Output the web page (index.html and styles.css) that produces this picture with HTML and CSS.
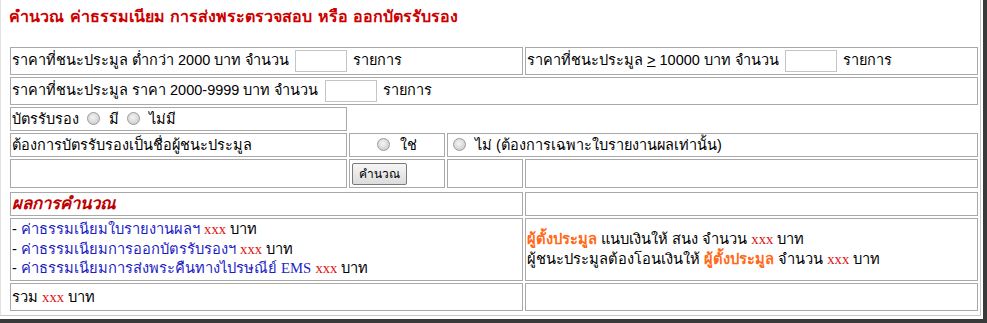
FILE: index.html
```html
<!DOCTYPE html>
<html lang="th">
<head>
  <meta charset="UTF-8">
  <title>คำนวณ ค่าธรรมเนียม</title>
  <link rel="stylesheet" href="styles.css">
</head>
<body>
  <div class="frame">
    <div class="page">
      <h1 class="title">คำนวณ ค่าธรรมเนียม การส่งพระตรวจสอบ หรือ ออกบัตรรับรอง</h1>

      <table class="grid calc-form">
        <colgroup>
          <col style="width:337px">
          <col style="width:96px">
          <col style="width:76px">
          <col style="width:453px">
        </colgroup>
        <tr class="row-input">
          <td colspan="3">ราคาที่ชนะประมูล ต่ำกว่า 2000 บาท จำนวน <input type="text" class="qty"> รายการ</td>
          <td>ราคาที่ชนะประมูล <u>&gt;</u> 10000 บาท จำนวน <input type="text" class="qty"> รายการ</td>
        </tr>
        <tr class="row-input">
          <td colspan="4">ราคาที่ชนะประมูล ราคา 2000-9999 บาท จำนวน <input type="text" class="qty"> รายการ</td>
        </tr>
        <tr class="row-plain">
          <td>บัตรรับรอง <input type="radio" name="card"> มี <input type="radio" name="card"> ไม่มี</td>
          <td class="blank" colspan="3"></td>
        </tr>
        <tr class="row-plain">
          <td>ต้องการบัตรรับรองเป็นชื่อผู้ชนะประมูล</td>
          <td class="center"><input type="radio" name="owner"> ใช่</td>
          <td colspan="2"><input type="radio" name="owner"> ไม่ (ต้องการเฉพาะใบรายงานผลเท่านั้น)</td>
        </tr>
        <tr class="row-button">
          <td></td>
          <td><button type="button" class="btn">คำนวณ</button></td>
          <td></td>
          <td></td>
        </tr>
      </table>

      <table class="grid calc-result">
        <colgroup>
          <col style="width:513px">
          <col style="width:453px">
        </colgroup>
        <tr class="row-head">
          <td><span class="result-head">ผลการคำนวณ</span></td>
          <td></td>
        </tr>
        <tr class="row-lines">
          <td>
            - <span class="fee">ค่าธรรมเนียมใบรายงานผลฯ</span> <span class="num">xxx</span> บาท<br>
            - <span class="fee">ค่าธรรมเนียมการออกบัตรรับรองฯ</span> <span class="num">xxx</span> บาท<br>
            - <span class="fee">ค่าธรรมเนียมการส่งพระคืนทางไปรษณีย์ <span class="latin">EMS</span></span> <span class="num">xxx</span> บาท
          </td>
          <td>
            <span class="party">ผู้ตั้งประมูล</span> แนบเงินให้ สนง จำนวน <span class="num">xxx</span> บาท<br>
            ผู้ชนะประมูลต้องโอนเงินให้ <span class="party">ผู้ตั้งประมูล</span> จำนวน <span class="num">xxx</span> บาท
          </td>
        </tr>
        <tr class="row-total">
          <td>รวม <span class="num">xxx</span> บาท</td>
          <td></td>
        </tr>
      </table>
    </div>
  </div>
</body>
</html>
```

FILE: styles.css
```css
html, body {
  margin: 0;
  padding: 0;
  background-color: #3a3a3a;
}

body {
  font-family: "Liberation Sans", Tahoma, "DejaVu Sans", sans-serif;
  font-size: 14.5px;
  color: #000;
}

.frame {
  width: 983px;
  height: 319px;
  background-color: #fff;
  overflow: hidden;
}

.page {
  width: 972px;
  height: 315px;
  padding-left: 7px;
  border-left: 1px solid #e2e2e2;
  border-right: 1px solid #c8c8c8;
  border-bottom: 1px solid #c8c8c8;
}

.title {
  margin: 0;
  padding: 7px 0 0 1px;
  height: 45px;
  box-sizing: border-box;
  font-family: Tahoma, "DejaVu Sans", sans-serif;
  font-size: 16px;
  line-height: 20px;
  font-weight: bold;
  color: #cc0000;
}

.grid {
  width: 972px;
  table-layout: fixed;
  border-collapse: separate;
  border-spacing: 2px;
}

.grid td {
  border: 1px solid #a9a9a9;
  padding: 0 1px;
  line-height: 18px;
  vertical-align: middle;
  white-space: nowrap;
  overflow: hidden;
}

.grid td.blank {
  border-color: transparent;
}

.grid td.center {
  text-align: center;
}

.row-input td {
  height: 26px;
}

.row-plain td {
  height: 22px;
}

.row-button td {
  height: 27px;
}

.calc-result td {
  font-size: 14.7px;
}

.row-head td {
  height: 22px;
}

.row-lines td {
  height: 61px;
  line-height: 19.5px;
}

.row-total td {
  height: 26px;
}

.qty {
  width: 52px;
  height: 22px;
  box-sizing: border-box;
  border: 1px solid #c4c4c4;
  padding: 0 2px;
  margin: 0 2px;
  vertical-align: middle;
  font-family: inherit;
}

input[type="radio"] {
  appearance: none;
  -webkit-appearance: none;
  width: 13px;
  height: 13px;
  margin: 0 5px 0 4px;
  border: 1px solid #9a9a9a;
  border-radius: 50%;
  background: radial-gradient(circle at 45% 40%, #f4f4f4 0, #dadada 55%, #c2c2c2 100%);
  vertical-align: -1px;
}

.center input[type="radio"] {
  margin-left: 0;
}

.btn {
  font-family: inherit;
  font-size: 12px;
  line-height: 18px;
  height: 22px;
  padding: 0 6px;
  margin-left: 1px;
  border: 1px solid #7a7a7a;
  border-radius: 2px;
  background: linear-gradient(#f6f6f6, #dcdcdc);
  color: #000;
  vertical-align: middle;
}

.result-head {
  font-size: 16.8px;
  font-weight: bold;
  font-style: italic;
  color: #c00000;
}

.fee {
  color: #1c1cc4;
}

.num {
  font-family: "Liberation Serif", "Times New Roman", serif;
  color: #e01010;
}

.latin {
  font-family: "Liberation Serif", "Times New Roman", serif;
}

.party {
  font-weight: bold;
  color: #ff6a1a;
}
```
